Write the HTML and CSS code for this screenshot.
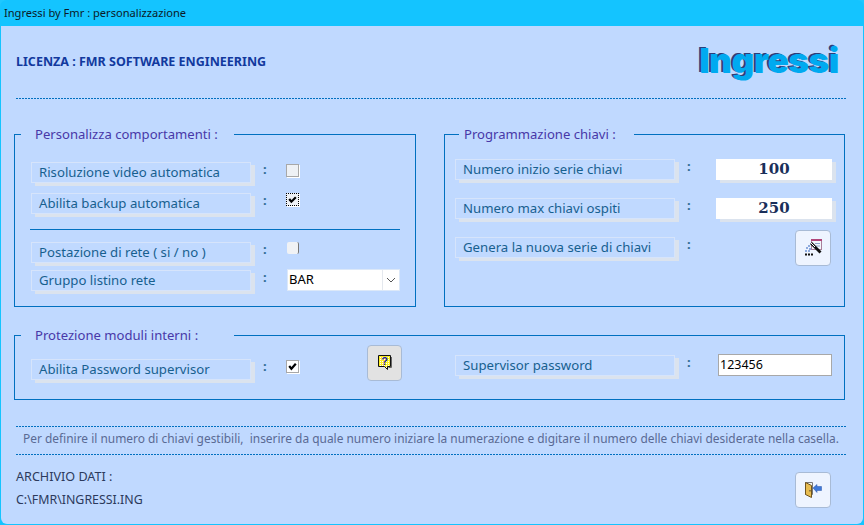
FILE: index.html
```html
<!DOCTYPE html>
<html lang="it">
<head>
<meta charset="utf-8">
<title>Ingressi by Fmr : personalizzazione</title>
<link rel="stylesheet" href="styles.css">
</head>
<body>
<div class="window">
  <div class="titlebar">Ingressi by Fmr : personalizzazione</div>
  <div class="content">
    <header class="head">
      <div class="license">LICENZA : FMR SOFTWARE ENGINEERING</div>
      <div class="logo">Ingressi</div>
    </header>
    <div class="dash"></div>
    <div class="columns">
      <fieldset class="group g-left">
        <legend class="lg lg-wide">Personalizza comportamenti :</legend>
        <div class="row r1"><div class="lab">Risoluzione video automatica</div><span class="colon">:</span><span class="check flat"></span></div>
        <div class="row r2"><div class="lab">Abilita backup automatica</div><span class="colon">:</span><span class="check flat focus"><svg viewBox="0 0 10 10" class="tick"><path d="M2 4.500 4 7 8 3" /></svg></span></div>
        <div class="sep"></div>
        <div class="row r3"><div class="lab">Postazione di rete ( si / no )</div><span class="colon">:</span><span class="check gray"></span></div>
        <div class="row r4"><div class="lab">Gruppo listino rete</div><span class="colon">:</span>
          <div class="combo"><span class="combo-val">BAR</span><span class="combo-btn"><svg viewBox="0 0 10 6" width="10" height="6"><path d="M1 1 5 5 9 1" fill="none" stroke="#555" stroke-width="1"/></svg></span></div>
        </div>
      </fieldset>
      <fieldset class="group g-right">
        <legend class="lg lg-mid">Programmazione chiavi :</legend>
        <div class="krow k1"><div class="lab">Numero inizio serie chiavi</div><span class="colon">:</span><div class="num">100</div></div>
        <div class="krow k2"><div class="lab">Numero max chiavi ospiti</div><span class="colon">:</span><div class="num">250</div></div>
        <div class="krow k3"><div class="lab">Genera la nuova serie di chiavi</div><span class="colon">:</span>
          <button class="btn btn-wand" aria-label="Genera">
            <svg viewBox="0 0 18 18" width="18" height="18">
              <rect x="7.500" y="0.500" width="10" height="10" fill="#f4f6fb" stroke="#a8809a"/>
              <rect x="7" y="0" width="11" height="2" fill="#b0457a"/>
              <path d="M11 4.500h5M12 7h4" stroke="#8fa6c8"/>
              <path d="M7 4 16.500 13.500" stroke="#111" stroke-width="2.800"/>
              <path d="M7 4 11 8" stroke="#fff" stroke-width="1"/>
              <path d="M4 7h2M2 9h2M5 10h2M1 12h2M4 12h2" stroke="#2e62c0" stroke-width="1.200"/>
              <path d="M1 15.500h2M4 15.500h2M7 15.500h2" stroke="#111" stroke-width="2"/>
            </svg>
          </button>
        </div>
      </fieldset>
    </div>
    <fieldset class="group g-bottom">
      <legend class="lg lg-wide">Protezione moduli interni :</legend>
      <div class="prow">
        <div class="pleft"><div class="lab">Abilita Password supervisor</div><span class="colon">:</span><span class="check white"><svg viewBox="0 0 10 10" class="tick"><path d="M2 4.500 4 7 8 2.500" /></svg></span></div>
        <button class="btn btn-help" aria-label="Aiuto">
          <svg viewBox="0 0 14 16" width="14" height="16">
            <defs><pattern id="dots" width="2" height="2" patternUnits="userSpaceOnUse"><rect width="2" height="2" fill="#ffef20"/><rect width="1" height="1" fill="#fff"/></pattern></defs>
            <path d="M.500.500h12v11h-3v3l-3-3h-6z" fill="url(#dots)" stroke="#111" stroke-width="1"/>
            <path d="M13.500 2v10.500h-3" fill="none" stroke="#666"/>
            <text x="6.500" y="10" class="q">?</text>
          </svg>
        </button>
        <div class="pright"><div class="lab">Supervisor password</div><span class="colon">:</span><div class="pass">123456</div></div>
      </div>
    </fieldset>
    <div class="dash d2"></div>
    <p class="note">Per definire il numero di chiavi gestibili,&nbsp; inserire da quale numero iniziare la numerazione e digitare il numero delle chiavi desiderate nella casella.</p>
    <div class="dash"></div>
    <footer class="foot">
      <div class="archive">
        <div>ARCHIVIO DATI :</div>
        <div class="path">C:\FMR\INGRESSI.ING</div>
      </div>
      <button class="btn btn-exit" aria-label="Esci">
        <svg viewBox="0 0 17 16" width="17" height="16">
          <path d="M.500.500h7v12h-7z" fill="#f4f4f0" stroke="#777"/>
          <path d="M.500.500 6.500 3.500v12l-6-3z" fill="#e8bc50" stroke="#6f5420"/>
          <path d="M5 8v1.500" stroke="#333"/>
          <path d="M8 6 12 2.500v2h4.500v4H12v2z" fill="#3f78d8" stroke="#2a55a8" stroke-width=".5"/>
        </svg>
      </button>
    </footer>
  </div>
</div>
</body>
</html>
```
FILE: styles.css
```css
* { box-sizing: border-box; }
html, body { margin: 0; padding: 0; }
body { width: 864px; height: 525px; overflow: hidden; background: #1ec8ff; font-family: "Noto Sans", sans-serif; }
.window { width: 864px; height: 525px; display: flex; flex-direction: column; background: #14c4ff; border-radius: 7px 7px 0 0; }
.titlebar { height: 26px; line-height: 26px; padding-left: 4px; font-family: "Noto Sans", sans-serif; font-size: 11.100px; color: #0b1a28; flex: none; }
.content { flex: 1; margin: 0 1px 1px; background: #c0d9ff; padding: 0 17px 0 13px; border-radius: 0 0 6px 6px; display: flex; flex-direction: column; position: relative; }
.head { height: 72px; display: flex; justify-content: space-between; align-items: flex-start; padding-left: 2px; }
.license { margin-top: 27px; font-size: 12.500px; font-weight: 700; color: #12399e; line-height: 18px; }
.logo { margin-top: 14px; margin-right: 7px; font-family: Inter, "Liberation Sans", sans-serif; font-weight: 900; font-size: 34.700px; line-height: 40px; letter-spacing: -.2px; color: #00aaf0; text-shadow: -2px -1px 0 #2d3f78; }
.dash { height: 1px; margin-left: 2px; margin-right: -1px; flex: none; background: repeating-linear-gradient(to right, #0070c0 0 2px, transparent 2px 3px); }
.columns { display: flex; gap: 28px; margin-top: 27px; }
.group { margin: 0; padding: 0; border: 1px solid #0070c0; min-width: 0; }
.lg { font-size: 13.100px; line-height: 16px; height: 16px; color: #4838a8; padding: 0 0 0 14px; margin-left: 6px; }
.lg-wide { width: 213px; }
.lg-mid { width: 175px; margin-left: 14px; padding-left: 5px; }
.g-left { width: 402px; height: 181px; }
.g-right { width: 401px; height: 181px; }
.row, .krow, .pleft, .pright { display: flex; align-items: flex-start; }
.row { padding-left: 16px; }
.r1 { margin-top: 20px; }
.r2 { margin-top: 10px; }
.r3 { margin-top: 0; }
.r4 { margin-top: 7px; }
.sep { height: 1px; background: #0070c0; margin: 15px 15px 12px 15px; }
.lab { width: 220px; height: 21px; line-height: 19px; padding-left: 7px; font-size: 13.200px; color: #17608f; border: 1px solid #d6e4fb; box-shadow: 4px 3px 0 #dbe3ee; background: #c0d9ff; flex: none; white-space: nowrap; }
.colon { width: 12px; margin-left: 12px; font-size: 13px; line-height: 14px; font-weight: 700; color: #2f6c94; flex: none; }
.check { width: 13px; height: 13px; margin-left: 11px; margin-top: 2px; display: block; flex: none; }
.flat { background: #eef1f5; border: 1px solid #a8a8a8; box-shadow: 1px 1px 0 #fff; }
.focus { margin-top: 0; border-color: #eef1f5; outline: 1px dotted #000; outline-offset: -1px; }
.gray { margin-top: 0; margin-left: 12px; background: #f0f2f5; border-right: 1px solid #777; border-radius: 2px; height: 12px; width: 12px; }
.white { margin-top: 1px; background: #fff; border: 1px solid #a8a8a8; box-shadow: 1px 1px 0 #fff; }
.tick { display: block; width: 11px; height: 11px; }
.tick path { fill: none; stroke: #000; stroke-width: 2; }
.combo { width: 113px; height: 22px; margin-left: 12px; margin-top: -1px; display: flex; background: #fff; border: 1px solid #dce8f8; flex: none; }
.combo-val { flex: 1; font-size: 13px; line-height: 19px; padding-left: 1px; color: #000; }
.combo-btn { width: 17px; display: flex; align-items: center; justify-content: center; border-left: 1px solid #e4e8ee; }
.krow { padding-left: 10px; }
.k1 { margin-top: 17px; }
.k2 { margin-top: 18px; }
.k3 { margin-top: 18px; }
.num { width: 116px; height: 21px; margin-left: 17px; background: #fff; box-shadow: 4px 3px 0 #dbe3ee; font-family: "DejaVu Serif", serif; font-weight: 700; font-size: 15px; line-height: 20px; text-align: center; color: #1a2f5a; flex: none; }
.btn { width: 36px; height: 36px; padding: 0; background: #eef4ff; border: 1px solid #a8bbd6; border-radius: 4px; display: flex; align-items: center; justify-content: center; flex: none; }
.btn-wand { margin-left: 96px; margin-top: -7px; }
.g-bottom { width: 831px; height: 73px; margin-top: 20px; }
.prow { display: flex; align-items: flex-start; padding-left: 16px; }
.pleft { margin-top: 16px; width: 336px; }
.btn-help { width: 35px; background: #e2e2e2; margin-top: 2px; }
.q { font-family: "Liberation Sans", sans-serif; font-weight: 700; font-size: 11px; fill: #1b1ba8; text-anchor: middle; }
.pright { margin-left: 53px; margin-top: 12px; }
.pass { width: 114px; height: 22px; margin-left: 19px; margin-top: -1px; background: #fff; border: 1px solid #a8a8a8; font-size: 12.500px; line-height: 20px; color: #000; padding-left: 1px; flex: none; }
.d2 { margin-top: 26px; }
.note { margin: 0; height: 27px; padding-left: 9px; font-size: 11.930px; line-height: 23px; color: #5a6a94; white-space: nowrap; flex: none; }
.foot { display: flex; justify-content: space-between; align-items: flex-start; padding-left: 2px; padding-right: 15px; }
.archive { font-size: 12.600px; line-height: 23px; color: #2c3a5c; margin-top: 10px; }
.path { font-size: 12.400px; }
.btn-exit { margin-top: 17px; }
```
